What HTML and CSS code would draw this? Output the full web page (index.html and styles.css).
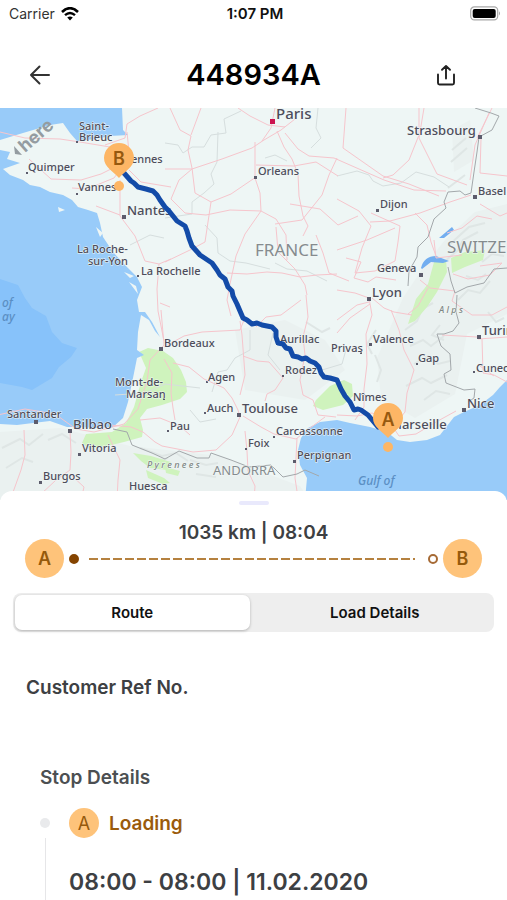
FILE: index.html
```html
<!DOCTYPE html>
<html lang="en">
<head>
  <meta charset="UTF-8" />
  <meta name="viewport" content="width=device-width, initial-scale=1.0"/>
  <title>448934A</title>
  <link rel="stylesheet" href="styles.css">
</head>
<body>
  <div class="status-bar">
    <div class="carrier">
      Carrier
      <svg width="18" height="14" viewBox="0 0 18 14" aria-hidden="true">
        <path d="M1 5 Q9 -2.6 17 5" fill="none" stroke="#000" stroke-width="2.6"/>
        <path d="M4 8.2 Q9 3.6 14 8.2" fill="none" stroke="#000" stroke-width="2.4"/>
        <path d="M6.2 10.6 Q9 8.2 11.8 10.6 L9 13.6Z"/>
      </svg>
    </div>
    <div class="clock">1:07 PM</div>
    <svg class="battery" width="31" height="15" viewBox="0 0 31 15" aria-hidden="true">
      <rect x="0.7" y="0.9" width="27" height="13" rx="3.6" fill="#fff" stroke="#a8a8a8" stroke-width="1.2"/>
      <rect x="2.7" y="2.9" width="23" height="9" rx="2" fill="#000"/>
      <path d="M29 5.2 Q31 7.4 29 9.6Z" fill="#a8a8a8"/>
    </svg>
  </div>

  <header class="top-bar">
    <button class="icon-btn" aria-label="Back">
      <svg width="24" height="24" viewBox="0 0 24 24" fill="none" stroke="#333" stroke-width="2" stroke-linecap="round" stroke-linejoin="round">
        <path d="M21 12H3M11.5 3.5L3 12l8.5 8.5"/>
      </svg>
    </button>
    <h1>448934A</h1>
    <button class="icon-btn share" aria-label="Share">
      <svg width="24" height="24" viewBox="0 0 24 24" fill="none" stroke="#222" stroke-width="1.900" stroke-linecap="round" stroke-linejoin="round">
        <path d="M4 11.5V20q0 1.5 1.5 1.5h13q1.5 0 1.5-1.5v-8.500M12 15.500V3M8 6.800L12 3l4 3.800"/>
      </svg>
    </button>
  </header>

  <main>
    <svg class="map" viewBox="0 108 507 392" role="img" aria-label="Route map">
      <rect class="land" x="0" y="108" width="507" height="392"/>

      <!-- terrain -->
      <g class="terrain">
        <path d="M445 240l30-28 32-8v110l-40 20-12 60-40 24-34-20-4-40 26-60 20-30z"/>
        <path d="M0 432l60-4 70 18 90 10 80 30 10 14H0z"/>
        <path d="M235 330l50-10 40 20 20 30-40 30-60-10z"/>
        <path d="M452 130l18-10 4 40-20 12z"/>
      </g>
      <g class="ridges">
        <path d="M2 448l18-9 9 6 14-11M6 468l16-10 11 4M48 440l14-6 14 9M84 444l10 8 12-5M140 448l22 8 14-3 12 8M190 460l16 5 12-2M196 474l20 3M152 462l16-4"/>
        <path d="M444 262l14-12 5-10 15-8M449 245l20-18 16-4M458 300l10-10 12 3 10-12M466 276l12 4 8-6M482 262l10-8 12 2M488 312l8 10 8-4"/>
        <path d="M405 330l12-9 5-12 11-6M410 346l13-6 8 6 13-10M414 364l14-8 10 8 12-3M406 386l16-8 9 5 16-8M424 400l12-9 14 3M440 325l-8 10 12 5M376 330l-9 14 5 10M375 355l6 15-4 12"/>
        <path d="M452 150l14-12M451 162l16-14M306 322l16 10 8-4M290 368l14 6 16-8M448 188l17-13"/>
      </g>

      <!-- parks -->
      <g class="park">
        <path d="M139 352l9-4 15 3 10 7 8 12 5 12 1 10-7 7-18 6-15 4-7 9 3 12-1 7-18 5-17 4-17 3-8-6 4-9 26-2 14-9 8-16 7-25 5-14z"/>
        <path d="M133 453l18 3 20 6-4 8-17-2-9-7z"/>
        <path d="M316 400l14-14 14-6 8 4 1 12-10 9-20 5-10-4z"/>
        <path d="M434 262l12-2 1 12-10 20-10 15-12 14-7 3 8-25 12-15z"/>
        <path d="M451 258l14-6 20-2-2 10-18 7-13 6z"/>
        <path d="M146 470l18 8 6 5-7 1-15-6zM165 467l15 4-2 5-12-3z"/>
      </g>

      <!-- sea -->
      <g class="sea">
        <path d="M0 108H122L123 130 128 135 110 136 96 139 77 141 70 133 63 123 50 125 23 133 0 140Z"/>
        <path d="M0 150L10 152 7 159 20 163 3 169 10 175 23 180 30 185 40 187 50 192 63 195 72 200 78 207 88 210 97 213 100 223 103 237 113 252 123 263 137 277 142 287 137 300 139 312 145 312 152 322 160 337 155 331 149 320 141 315 138 332 137 350 144 355 137 358 133 378 128 402 123 418 113 427 97 428 80 427 67 427 50 421 33 423 17 425 0 424Z"/>
        <path d="M507 380L500 387 493 395 480 405 464 412 454 417 447 426 440 435 427 440 410 442 397 440 387 432 370 427 350 423 337 420 320 422 308 428 301 438 298 450 300 465 307 478 305 500H507Z"/>
      </g>
      <path class="deep-sea" d="M0 279L18 285 25 298 32 308 46 316 52 332 62 343 77 348 71 357 59 367 52 378 32 390 22 387 0 383Z"/>
      <g class="land">
        <path d="M96 227l7 6-3 4zM58 207l7 3-6 2zM124 272l10 4-4 2zM129 282l7 4 2 8z"/>
      </g>
      <g class="lake">
        <path d="M421 268q3-12 15-12l13 5-6 2-12-1-9 7zM439 238l13-11 2 3-10 8z"/>
      </g>

      <!-- regional borders -->
      <g class="region">
        <path d="M165 143l13 2 5 8 9-6 12 0 7-12 15-2-2-14 17-8M218 132l-1 30-6 12 3 10-10 9-12 9 0 12-27 4M265 158l10-3 12 6M318 108l-2 20 5 10-10 10M337 176l20-5 12 4 4 6 10 5 18-3 15-11 18 5 15 10M205 225l12 13 1 15 12 8 16 2 24 6M250 330l0 20-15 8-8 12-9 2-6 20M273 333l-5 22 12 15M130 245l20-10 14 3"/>
        <path d="M115 395l30-2 20-9 35 4M190 410l10 12 16-3M322 370l20-6 5-18M275 263l12 6 20 2 20 10"/>
      </g>

      <!-- roads -->
      <g class="road">
        <path d="M170 108l10 22 11 6-3 14 4 18 3 25 16 9M201 108l-10 27M165 169l27 0 30-10 30-11 12-8 17-10 14-11M192 169l-13 11-8 19 14 14 21 2 24-5 31 1 15 8 10 16 1 25M211 202l-6 40-15 8-25 12M211 202l20-8 25-17M238 108l12 8 18 9 17 2M255 142l0 36 5 15 1 18-16 23-9 22-6 28-3 16 4 16M275 108l-4 20-9 13M277 131l7 16 8 12 6 15 1 22 4 20 5 10-5 10"/>
        <path d="M285 133l13 16 11 7 25 2 50 22 30 10 32 1M337 158l-8 17-7 20-20 25-27 4M256 165l38 1 22-4 22 14M346 108l-3 40 40 28 26 8 30 12M383 178l10-3 16-15 10-25 0-27M424 108l-5 30 18 36 30 11M470 180l5-35 14-32M481 139l-1 34 27 3M358 216l-20 9-18-16-30-5M371 226l-9 22-7 25 20-2 20-10 3-19 2-16-29-13M370 222l20-1 30-8 30-11 21-7M415 213l12 12 4 17 5 14"/>
        <path d="M337 199l22 12 12 15M337 250l30-10 28-12M346 258l15 4-7 16 14 4 8-5 20 3M337 290l18 3 14 5 3 17-6 19 1 30-3 25 0 18-9 13M372 298l12 10 10 4 18 3M391 310l8 20 5 20 10 20-7 23-2 19-13 16M370 304l-20 14-13 15M337 415l20 1 15-3 15 5 12 18 17-2 20-12 20-11"/>
        <path d="M0 132l25 6 35 1 20 3 30 5 10 6M105 145l20-7 2-14 13-8 18-8M127 132l2 20-8 12-20 10-20 6-30-1-22-20M72 188l15 1 27-11 6-8M120 180l0 36 15 20 10 25 14 3 12-5M96 206l24 9M129 170l12 12 30 5M159 264l-2 25 1 22 6 30"/>
        <path d="M160 303l10 4M161 310l3 35-14 15-3 21-9 28-14 15-30 8-18-3-21-15-30-5-41 9M140 420l20-2 20 8 10 9M164 347l20-11 18-4 38-2 4-10M173 363l16 4 15 12 20 9 8 10 6 12 2 7-8 18-16 15-23 2-31-6-7-4-12-10-12-5-21-2M240 395l5-20-3-40-2-14M243 356l14 5 12 1 14 16-8 12-8 4-2 7M243 416l18 11 13 7 22 5 10-8 19-14"/>
        <path d="M164 359l8 14-1 20 2 15 2 12M24 430l1 25-4 15-9 25M70 432l1 20-1 18-14 10-16 15M108 435l12 25-2 20-1 20M71 475l13 12-3 13M245 431l2 20 1 20 7 15-1 14M297 438l-1 20-1 20 3 20M301 300l-20 15-15 2-10 10M306 295l2 22-5 20 2 18-5 25 3 15 10 5 5 15 18 2"/>
        <path d="M227 273l20 1 20-2 15 1 18 4 17-2 20-1M316 235l7 18 6 20 20 8M276 227l2 24M278 252l17 17 10 16 2 10M337 320l20-15 12-3M492 108l-15 30M480 204l20 12 7-3M447 233l15-5 15-12 15 3M434 240l2 18 26-3M480 266l22-3-12 12-22 4-15-5M420 280l10 8 25 3-3 10 20 14 20 0 15-8M478 339l29-2M482 339l1 34 11 2 13 7M442 335l35 2M480 366l14 10M428 288l-10 18-10 8"/>
      </g>

      <!-- country borders -->
      <g class="border">
        <path d="M475 108l16 5 8 3-7 14-13 7-2 15-3 20-3 21-6 2-5-4-12 1-4 10 2 6-12 11-6 18-10 10-1 10-8 14-1 15M448 267l3 14 4 12 12-6 17-4 10-14 13-1M457 295l-1 17 3 11-6 8-9 3-7 0 4 12 9 8 1 16-7 4 2 9 18 7 11-1-1 9-6 4"/>
        <path d="M113 429l14 3 5 13 20 8 13 6 14-8 18 7 12 0 2-5 20 7 18 7 22-2 12 12 14-3 8-4 14 6"/>
      </g>

      <!-- cities -->
      <g class="dot">
        <path d="M76 141h2v2h-2zM26 172h2v2h-2zM76 193h2v2h-2zM122 215h4v4h-4zM137 275h2v2h-2zM254 176h3v3h-3zM478 135h4v4h-4zM376 209h3v3h-3zM473 195h4v4h-4zM419 273h4v4h-4zM367 297h4v4h-4zM159 347h4v4h-4zM34 420h4v4h-4zM68 429h4v4h-4zM78 453h3v3h-3zM39 481h3v3h-3zM163 398h2v2h-2zM206 381h2v2h-2zM237 413h4v4h-4zM204 412h2v2h-2zM167 430h2v2h-2zM273 436h2v2h-2zM245 448h2v2h-2zM293 460h3v3h-3zM282 375h2v2h-2zM360 352h2v2h-2zM369 343h3v3h-3zM416 363h2v2h-2zM477 335h4v4h-4zM473 371h2v2h-2zM462 408h4v4h-4zM276 343h2v2h-2z"/>
      </g>
      <rect class="capital" x="270" y="119" width="5" height="5"/>

      <g class="label small">
        <text x="79" y="130">Saint-</text>
        <text x="79" y="141">Brieuc</text>
        <text x="28" y="171">Quimper</text>
        <text x="78" y="191">Vannes</text>
        <text x="124" y="163">Rennes</text>
        <text x="77" y="253">La Roche-</text>
        <text x="88" y="265">sur-Yon</text>
        <text x="141" y="275">La Rochelle</text>
        <text x="258" y="175">Orleans</text>
        <text x="380" y="208">Dijon</text>
        <text x="478" y="195">Basel</text>
        <text x="377" y="272">Geneva</text>
        <text x="164" y="347">Bordeaux</text>
        <text x="115" y="386">Mont-de-</text>
        <text x="126" y="398">Marsan</text>
        <text x="7" y="418">Santander</text>
        <text x="82" y="452">Vitoria</text>
        <text x="43" y="480">Burgos</text>
        <text x="129" y="490">Huesca</text>
        <text x="208" y="381">Agen</text>
        <text x="207" y="412">Auch</text>
        <text x="170" y="430">Pau</text>
        <text x="248" y="447">Foix</text>
        <text x="276" y="435">Carcassonne</text>
        <text x="297" y="459">Perpignan</text>
        <text x="280" y="343">Aurillac</text>
        <text x="285" y="374">Rodez</text>
        <text x="331" y="352">Privas</text>
        <text x="373" y="343">Valence</text>
        <text x="418" y="362">Gap</text>
        <text x="476" y="372">Cuneo</text>
        <text x="353" y="401">Nîmes</text>
      </g>
      <g class="label">
        <text class="big" x="276" y="119">Paris</text>
        <text x="407" y="135">Strasbourg</text>
        <text x="127" y="215">Nantes</text>
        <text x="372" y="297">Lyon</text>
        <text x="482" y="335">Turin</text>
        <text x="467" y="408">Nice</text>
        <text x="390" y="429">Marseille</text>
        <text x="242" y="413">Toulouse</text>
        <text x="73" y="429">Bilbao</text>
      </g>
      <g class="label country">
        <text x="255" y="256">FRANCE</text>
        <text x="447" y="253">SWITZERLAND</text>
      </g>
      <text class="label country-small" x="213" y="475">ANDORRA</text>
      <g class="label water">
        <text x="2" y="307">of</text>
        <text x="2" y="321">ay</text>
        <text x="358" y="485">Gulf of</text>
      </g>
      <g class="label range">
        <text x="439" y="313">A l p s</text>
        <text x="147" y="468">P y r e n e e s</text>
      </g>
      <g class="here">
        <path d="M14 146l8 9-7-1z"/>
        <text transform="translate(25 153) rotate(-41)">here</text>
      </g>

      <path class="route" d="M124 173L131 181 134 183 138 187 146 189 153 191 157 195 160 200 165 207 169 211 177 221 185 226 187 231 189 238 192 246 200 255 206 259 212 263 217 270 220 275 225 279 228 287 232 291 233 296 237 304 243 318 247 320 252 324 257 323 262 325 267 326 272 327 276 331 276 337 278 343 283 344 286 348 290 349 293 356 298 357 302 359 306 358 310 361 315 363 319 367 321 373 324 377 330 378 337 380 341 389 345 396 350 402 354 410 358 409 361 410 368 415 378 427"/>

      <g class="pin">
        <path d="M119 143a15 15 0 0 1 15 15c0 9-9 13-15 20c-6-7-15-11-15-20a15 15 0 0 1 15-15z"/>
        <circle cx="119" cy="186" r="5"/>
        <text x="119" y="165">B</text>
        <path d="M388 403a15 15 0 0 1 15 15c0 9-9 13-15 20c-6-7-15-11-15-20a15 15 0 0 1 15-15z"/>
        <circle cx="388" cy="447" r="5"/>
        <text x="388" y="426">A</text>
      </g>
    </svg>

    <section class="sheet">
      <div class="handle"></div>
      <p class="summary">1035 km | 08:04</p>
      <div class="track">
        <span class="badge">A</span>
        <span class="point filled"></span>
        <svg class="dashes" height="2" aria-hidden="true"><line x1="0" y1="1" x2="100%" y2="1"/></svg>
        <span class="point"></span>
        <span class="badge">B</span>
      </div>

      <div class="tabs">
        <button class="tab active">Route</button>
        <button class="tab">Load Details</button>
      </div>

      <h2 class="ref">Customer Ref No.</h2>

      <h2 class="stops-title">Stop Details</h2>
      <div class="stop">
        <div class="rail"></div>
        <div class="stop-info">
          <div class="stop-head">
            <span class="badge light">A</span>
            <span>Loading</span>
          </div>
          <p class="stop-time">08:00 - 08:00 | 11.02.2020</p>
        </div>
      </div>
    </section>
  </main>
</body>
</html>
```
FILE: styles.css
```css
* {
  box-sizing: border-box;
}
body {
  margin: 0;
  min-height: 100vh;
  display: flex;
  flex-direction: column;
  font-family: Inter, "Liberation Sans", sans-serif;
  background: #fff;
  color: #3d4043;
}
h1, h2, p {
  margin: 0;
  font-weight: 600;
}
button {
  font-family: inherit;
  border: none;
  background: none;
  padding: 0;
  cursor: pointer;
}

/* status bar */
.status-bar {
  display: grid;
  grid-template-columns: 1fr auto 1fr;
  align-items: center;
  height: 27px;
  padding: 0 6px 0 9px;
  color: #111;
  font-size: 14px;
}
.carrier {
  display: flex;
  align-items: center;
  gap: 6px;
  color: #333;
}
.clock {
  font-size: 15px;
  font-weight: 600;
}
.battery {
  justify-self: end;
}

.top-bar {
  display: grid;
  grid-template-columns: 1fr auto 1fr;
  align-items: center;
  height: 81px;
  padding: 14px 28px 0;
}
.top-bar h1 {
  font-size: 29px;
  line-height: 32px;
  color: #000;
}
.icon-btn {
  display: flex;
}
.share {
  justify-self: end;
  margin-right: 21px;
}

main {
  flex: 1;
  display: flex;
  flex-direction: column;
}

/* map */
.map {
  display: block;
  width: 100%;
}
.land {
  fill: #eef6f5;
}
.terrain {
  fill: #eaf1f0;
}
.ridges {
  fill: none;
  stroke: #dfe6e5;
  stroke-width: 2;
}
.park {
  fill: #cff3bd;
}
.sea {
  fill: #98cbf9;
}
.deep-sea {
  fill: #87c2fa;
}
.lake {
  fill: #72aef0;
}
.region {
  fill: none;
  stroke: #d6dede;
  stroke-width: 1;
}
.road {
  fill: none;
  stroke: #f6c5cc;
  stroke-width: 1;
  stroke-linejoin: round;
}
.border {
  fill: none;
  stroke: #a3a8ab;
  stroke-width: 1;
}
.dot {
  fill: #5c5c6c;
}
.capital {
  fill: #cc1450;
}
.route {
  fill: none;
  stroke: #134ba8;
  stroke-width: 5;
  stroke-linejoin: round;
  stroke-linecap: round;
}
.label {
  font-family: "Noto Sans", sans-serif;
  font-size: 13px;
  font-weight: 500;
  fill: #4d4d5b;
  paint-order: stroke;
  stroke: #f2f8f7;
  stroke-width: 1px;
}
.small {
  font-size: 11px;
}
.big {
  font-size: 15px;
}
.country {
  font-size: 17px;
  font-weight: 400;
  fill: #858b8e;
}
.country-small {
  font-size: 13px;
  font-weight: 400;
  fill: #858b8e;
}
.water {
  font-size: 12px;
  font-style: italic;
  fill: #5b8fc4;
  stroke: none;
}
.range {
  font-size: 9px;
  font-style: italic;
  fill: #7f8784;
}
.here {
  fill: #949ca1;
  font-size: 18px;
  font-weight: 700;
}
.pin {
  fill: #fdb665;
}
.pin text {
  fill: #96590f;
  font-size: 18px;
  font-weight: 600;
  text-anchor: middle;
}

/* bottom sheet */
.sheet {
  position: relative;
  flex: 1;
  display: flex;
  flex-direction: column;
  margin-top: -9px;
  padding: 10px 13px 0;
  border-radius: 12px 12px 0 0;
  background: #fff;
}
.handle {
  width: 30px;
  height: 4px;
  margin: 0 auto;
  border-radius: 2px;
  background: #e9e9fc;
}
.summary {
  margin-top: 16px;
  font-size: 19px;
  line-height: 24px;
  text-align: center;
}
.track {
  display: flex;
  align-items: center;
  margin: -6px 12px 0;
}
.badge {
  display: flex;
  align-items: center;
  justify-content: center;
  width: 39px;
  height: 39px;
  border-radius: 50%;
  background: #fec37a;
  color: #955a0c;
  font-size: 18px;
  font-weight: 600;
}
.badge.light {
  width: 30px;
  height: 30px;
  font-weight: 400;
}
.point {
  width: 10px;
  height: 10px;
  margin: 0 5px;
  border: 2px solid #a66a35;
  border-radius: 50%;
}
.point.filled {
  border-color: #854400;
  background: #854400;
}
.dashes {
  flex: 1;
  width: 0;
  margin: 0 8px 0 5px;
}
.dashes line {
  stroke: #b5813f;
  stroke-width: 2;
  stroke-dasharray: 9 3;
}

.tabs {
  display: flex;
  gap: 8px;
  margin-top: 15px;
  padding: 2px;
  border-radius: 8px;
  background: #eee;
}
.tab {
  flex: 1;
  height: 35px;
  border-radius: 7px;
  color: #111;
  font-size: 15px;
  font-weight: 600;
}
.tab.active {
  background: #fff;
  box-shadow: 0 1px 3px rgba(0, 0, 0, 0.25);
}

.ref {
  margin: 44px 13px 0;
  font-size: 19px;
  line-height: 24px;
}
.stops-title {
  margin: 66px 27px 0;
  color: #4c4f52;
  font-size: 19px;
  line-height: 24px;
}
.stop {
  flex: 1;
  display: flex;
  margin: 18px 27px 0;
}
.rail {
  display: flex;
  flex-direction: column;
  align-items: center;
  gap: 10px;
  width: 10px;
  margin-right: 19px;
  padding-top: 10px;
}
.rail::before {
  content: "";
  width: 10px;
  height: 10px;
  border-radius: 50%;
  background: #e9eaec;
}
.rail::after {
  content: "";
  flex: 1;
  width: 1px;
  background: #e6e6e8;
}
.stop-head {
  display: flex;
  align-items: center;
  gap: 10px;
  color: #9a5b0c;
  font-size: 19px;
  font-weight: 600;
}
.stop-time {
  margin-top: 28px;
  font-size: 23px;
  line-height: 32px;
}
```
